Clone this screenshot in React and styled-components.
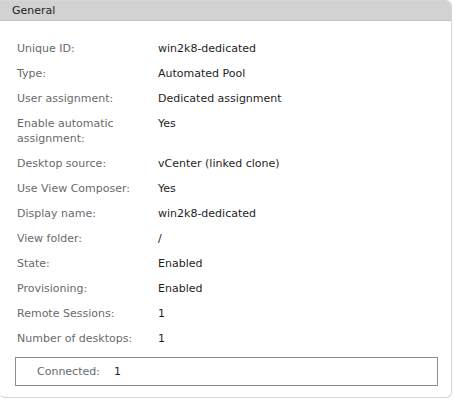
import React from "react";
import styled, { createGlobalStyle } from "styled-components";

const Global = createGlobalStyle`
  html, body { margin: 0; padding: 0; background: #fff; }
  body { font-family: Verdana, "DejaVu Sans", sans-serif; font-size: 11px; }
`;

const Panel = styled.div`
  width: 453px;
  height: 398px;
  box-sizing: border-box;
  border: 1px solid #d6d6d6;
  border-left-color: #f0f0f0;
  border-radius: 0 6px 6px 6px;
  margin-left: -1px;
  overflow: hidden;
  background: #fff;
`;

const Header = styled.div`
  height: 19px;
  background: #d2d2d2;
  border-bottom: 1px solid #c4c4c4;
  color: #222;
  padding-left: 12px;
  line-height: 19px;
  font-size: 11px;
`;

const Body = styled.div`
  padding: 15px 15px 0 17px;
`;

const Row = styled.div`
  display: grid;
  grid-template-columns: 141px 1fr;
  line-height: 15px;
  padding: 5px 0;
`;

const Label = styled.div`
  color: #6a6a6a;
  padding-right: 10px;
`;

const Value = styled.div`
  color: #1e1e1e;
`;

const SubBox = styled.div`
  margin: 6px 0 0 -2px;
  width: 423px;
  height: 29px;
  box-sizing: border-box;
  border: 1px solid #8c8c8c;
  display: flex;
  align-items: center;
  padding-left: 21px;
  gap: 4px;
`;

const rows = [
  ["Unique ID:", "win2k8-dedicated"],
  ["Type:", "Automated Pool"],
  ["User assignment:", "Dedicated assignment"],
  ["Enable automatic assignment:", "Yes"],
  ["Desktop source:", "vCenter (linked clone)"],
  ["Use View Composer:", "Yes"],
  ["Display name:", "win2k8-dedicated"],
  ["View folder:", "/"],
  ["State:", "Enabled"],
  ["Provisioning:", "Enabled"],
  ["Remote Sessions:", "1"],
  ["Number of desktops:", "1"],
];

export default function App() {
  return (
    <>
      <Global />
      <Panel>
        <Header>General</Header>
        <Body>
          {rows.map(([l, v]) => (
            <Row key={l}>
              <Label>{l}</Label>
              <Value>{v}</Value>
            </Row>
          ))}
          <SubBox>
            <Label as="span">Connected:</Label>
            <Value as="span">1</Value>
          </SubBox>
        </Body>
      </Panel>
    </>
  );
}
